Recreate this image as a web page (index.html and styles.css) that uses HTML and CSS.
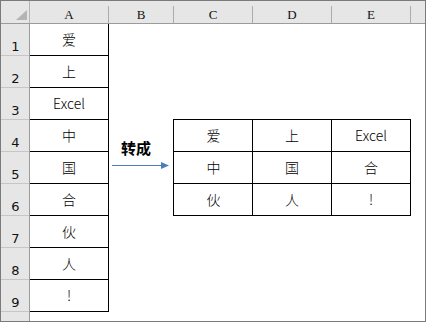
FILE: index.html
```html
<!DOCTYPE html>
<html lang="zh">
<head>
<meta charset="utf-8">
<link rel="stylesheet" href="styles.css">
</head>
<body>
<div class="sheet">
  <div class="head">
    <div class="corner"><span class="tri"></span></div>
    <div class="ch w-a">A</div>
    <div class="ch w-b">B</div>
    <div class="ch w-c">C</div>
    <div class="ch w-c">D</div>
    <div class="ch w-c">E</div>
    <div class="ch-rest"></div>
  </div>
  <div class="body">
    <div class="rows">
      <div class="rh">1</div>
      <div class="rh">2</div>
      <div class="rh">3</div>
      <div class="rh">4</div>
      <div class="rh">5</div>
      <div class="rh">6</div>
      <div class="rh">7</div>
      <div class="rh">8</div>
      <div class="rh">9</div>
      <div class="rh-rest"></div>
    </div>
    <div class="col-a">
      <div class="cell">爱</div>
      <div class="cell">上</div>
      <div class="cell">Excel</div>
      <div class="cell">中</div>
      <div class="cell">国</div>
      <div class="cell">合</div>
      <div class="cell">伙</div>
      <div class="cell">人</div>
      <div class="cell">!</div>
    </div>
    <div class="col-b">
      <div class="label">转成</div>
      <svg class="arrow" width="58" height="9" viewBox="0 0 58 9">
        <line x1="0" y1="4.5" x2="50" y2="4.5" stroke="#4a7ebb" stroke-width="1.2"/>
        <polygon points="49,1 57,4.5 49,8" fill="#4a7ebb"/>
      </svg>
    </div>
    <div class="area">
      <div class="table">
        <div class="tc">爱</div>
        <div class="tc">上</div>
        <div class="tc">Excel</div>
        <div class="tc">中</div>
        <div class="tc">国</div>
        <div class="tc">合</div>
        <div class="tc">伙</div>
        <div class="tc">人</div>
        <div class="tc">!</div>
      </div>
    </div>
  </div>
</div>
</body>
</html>
```
FILE: styles.css
```css
* { box-sizing: border-box; }
html, body { margin: 0; padding: 0; background: #fff; }
.sheet {
  width: 426px;
  height: 322px;
  border: 1px solid #7a7a7a;
  overflow: hidden;
  font-family: "Noto Sans CJK SC", "Noto Sans", sans-serif;
  color: #000;
}
.head {
  display: flex;
  height: 23px;
  background: #e6e6e6;
  border-bottom: 1px solid #9b9b9b;
}
.corner {
  width: 29px;
  height: 22px;
  border-right: 1px solid #b5b5b5;
  position: relative;
}
.tri {
  position: absolute;
  right: 2px;
  bottom: 3px;
  width: 0;
  height: 0;
  border-left: 11px solid transparent;
  border-bottom: 10px solid #b4b4b4;
}
.ch {
  margin-top: 5px;
  height: 17px;
  border-right: 1px solid #ababab;
  font-family: "Liberation Serif", "DejaVu Serif", serif;
  font-size: 13px;
  line-height: 17px;
  text-align: center;
  color: #111;
}
.w-a { width: 79px; }
.w-b { width: 65px; }
.w-c { width: 79px; }
.ch-rest { flex: 1; }
.body {
  display: flex;
  height: 297px;
}
.rows {
  width: 29px;
  background: #e6e6e6;
  border-right: 1px solid #9b9b9b;
  display: flex;
  flex-direction: column;
}
.rh {
  height: 32px;
  border-bottom: 1px solid #c6c6c6;
  font-family: "DejaVu Sans", "Liberation Sans", sans-serif;
  font-size: 13px;
  line-height: 15px;
  display: flex;
  align-items: flex-end;
  justify-content: center;
  padding-bottom: 1px;
  padding-left: 1px;
  color: #111;
}
.rh-rest { flex: 1; }
.col-a {
  width: 79px;
  display: flex;
  flex-direction: column;
}
.cell {
  height: 32px;
  border-right: 1px solid #000;
  border-bottom: 1px solid #000;
  display: flex;
  align-items: center;
  justify-content: center;
  font-size: 14px;
  font-weight: 300;
  padding-bottom: 1px;
}
.col-b {
  width: 64px;
  display: flex;
  flex-direction: column;
  padding-top: 114px;
}
.label {
  font-size: 15px;
  font-weight: bold;
  line-height: 20px;
  padding-left: 12px;
}
.arrow {
  display: block;
  margin-top: 3px;
  margin-left: 3px;
}
.area {
  padding-top: 95px;
}
.table {
  display: grid;
  grid-template-columns: 80px 79px 79px;
  border-top: 1px solid #000;
}
.tc {
  height: 32px;
  border-right: 1px solid #000;
  border-bottom: 1px solid #000;
  display: flex;
  align-items: center;
  justify-content: center;
  font-size: 14px;
  font-weight: 300;
  padding-bottom: 1px;
}
.tc:nth-child(3n+1) {
  border-left: 1px solid #000;
  padding-left: 1px;
}
```
